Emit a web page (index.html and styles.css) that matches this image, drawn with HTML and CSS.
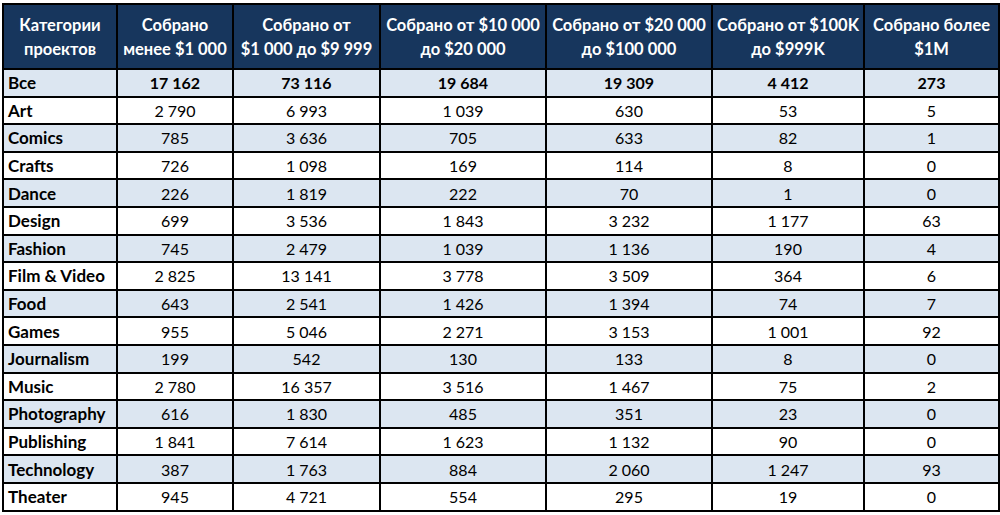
FILE: index.html
```html
<!DOCTYPE html>
<html lang="ru">
<head>
<meta charset="utf-8">
<title>Категории проектов</title>
<link rel="stylesheet" href="styles.css">
</head>
<body>
<div class="sheet">
<table class="stats">
  <colgroup>
    <col class="c1"><col class="c2"><col class="c3"><col class="c4"><col class="c5"><col class="c6"><col class="c7">
  </colgroup>
  <thead>
    <tr>
      <th>Категории<br>проектов</th>
      <th>Собрано<br>менее $1 000</th>
      <th>Собрано от<br>$1 000 до $9 999</th>
      <th>Собрано от $10 000<br>до $20 000</th>
      <th>Собрано от $20 000<br>до $100 000</th>
      <th>Собрано от $100K<br>до $999K</th>
      <th>Собрано более<br>$1M</th>
    </tr>
  </thead>
  <tbody>
    <tr class="alt total"><td class="cat">Все</td><td>17 162</td><td>73 116</td><td>19 684</td><td>19 309</td><td>4 412</td><td>273</td></tr>
    <tr><td class="cat">Art</td><td>2 790</td><td>6 993</td><td>1 039</td><td>630</td><td>53</td><td>5</td></tr>
    <tr class="alt"><td class="cat">Comics</td><td>785</td><td>3 636</td><td>705</td><td>633</td><td>82</td><td>1</td></tr>
    <tr><td class="cat">Crafts</td><td>726</td><td>1 098</td><td>169</td><td>114</td><td>8</td><td>0</td></tr>
    <tr class="alt"><td class="cat">Dance</td><td>226</td><td>1 819</td><td>222</td><td>70</td><td>1</td><td>0</td></tr>
    <tr><td class="cat">Design</td><td>699</td><td>3 536</td><td>1 843</td><td>3 232</td><td>1 177</td><td>63</td></tr>
    <tr class="alt"><td class="cat">Fashion</td><td>745</td><td>2 479</td><td>1 039</td><td>1 136</td><td>190</td><td>4</td></tr>
    <tr><td class="cat">Film &amp; Video</td><td>2 825</td><td>13 141</td><td>3 778</td><td>3 509</td><td>364</td><td>6</td></tr>
    <tr class="alt"><td class="cat">Food</td><td>643</td><td>2 541</td><td>1 426</td><td>1 394</td><td>74</td><td>7</td></tr>
    <tr><td class="cat">Games</td><td>955</td><td>5 046</td><td>2 271</td><td>3 153</td><td>1 001</td><td>92</td></tr>
    <tr class="alt"><td class="cat">Journalism</td><td>199</td><td>542</td><td>130</td><td>133</td><td>8</td><td>0</td></tr>
    <tr><td class="cat">Music</td><td>2 780</td><td>16 357</td><td>3 516</td><td>1 467</td><td>75</td><td>2</td></tr>
    <tr class="alt"><td class="cat">Photography</td><td>616</td><td>1 830</td><td>485</td><td>351</td><td>23</td><td>0</td></tr>
    <tr><td class="cat">Publishing</td><td>1 841</td><td>7 614</td><td>1 623</td><td>1 132</td><td>90</td><td>0</td></tr>
    <tr class="alt"><td class="cat">Technology</td><td>387</td><td>1 763</td><td>884</td><td>2 060</td><td>1 247</td><td>93</td></tr>
    <tr><td class="cat">Theater</td><td>945</td><td>4 721</td><td>554</td><td>295</td><td>19</td><td>0</td></tr>
  </tbody>
</table>
</div>
</body>
</html>
```
FILE: styles.css
```css
html, body {
  margin: 0;
  padding: 0;
  background: #ffffff;
}

.sheet {
  padding: 3px 0 0 2px;
}

.stats {
  border-collapse: collapse;
  table-layout: fixed;
  width: 996px;
  font-family: Lato, "Open Sans", "Liberation Sans", sans-serif;
  font-size: 16px;
  color: #000;
}

.c1 { width: 114px; }
.c2 { width: 116px; }
.c3 { width: 147px; }
.c4 { width: 166px; }
.c5 { width: 166px; }
.c6 { width: 152px; }
.c7 { width: 135px; }

.stats th,
.stats td {
  border: 2px solid #000;
  padding: 0 2px;
  overflow: hidden;
  white-space: nowrap;
}

.stats th {
  background: #17365d;
  color: #ffffff;
  font-weight: 700;
  font-size: 16.5px;
  line-height: 24px;
  height: 63px;
  text-align: center;
  vertical-align: middle;
}

.stats td {
  height: 24.6px;
  line-height: 20px;
  text-align: center;
  vertical-align: middle;
  padding-top: 1px;
  padding-bottom: 0;
}

.stats td.cat {
  text-align: left;
  font-weight: 700;
  font-size: 17px;
  padding-left: 4px;
}

.stats tr.alt td {
  background: #dce6f1;
}

.stats tr.total td {
  font-weight: 700;
}
```
